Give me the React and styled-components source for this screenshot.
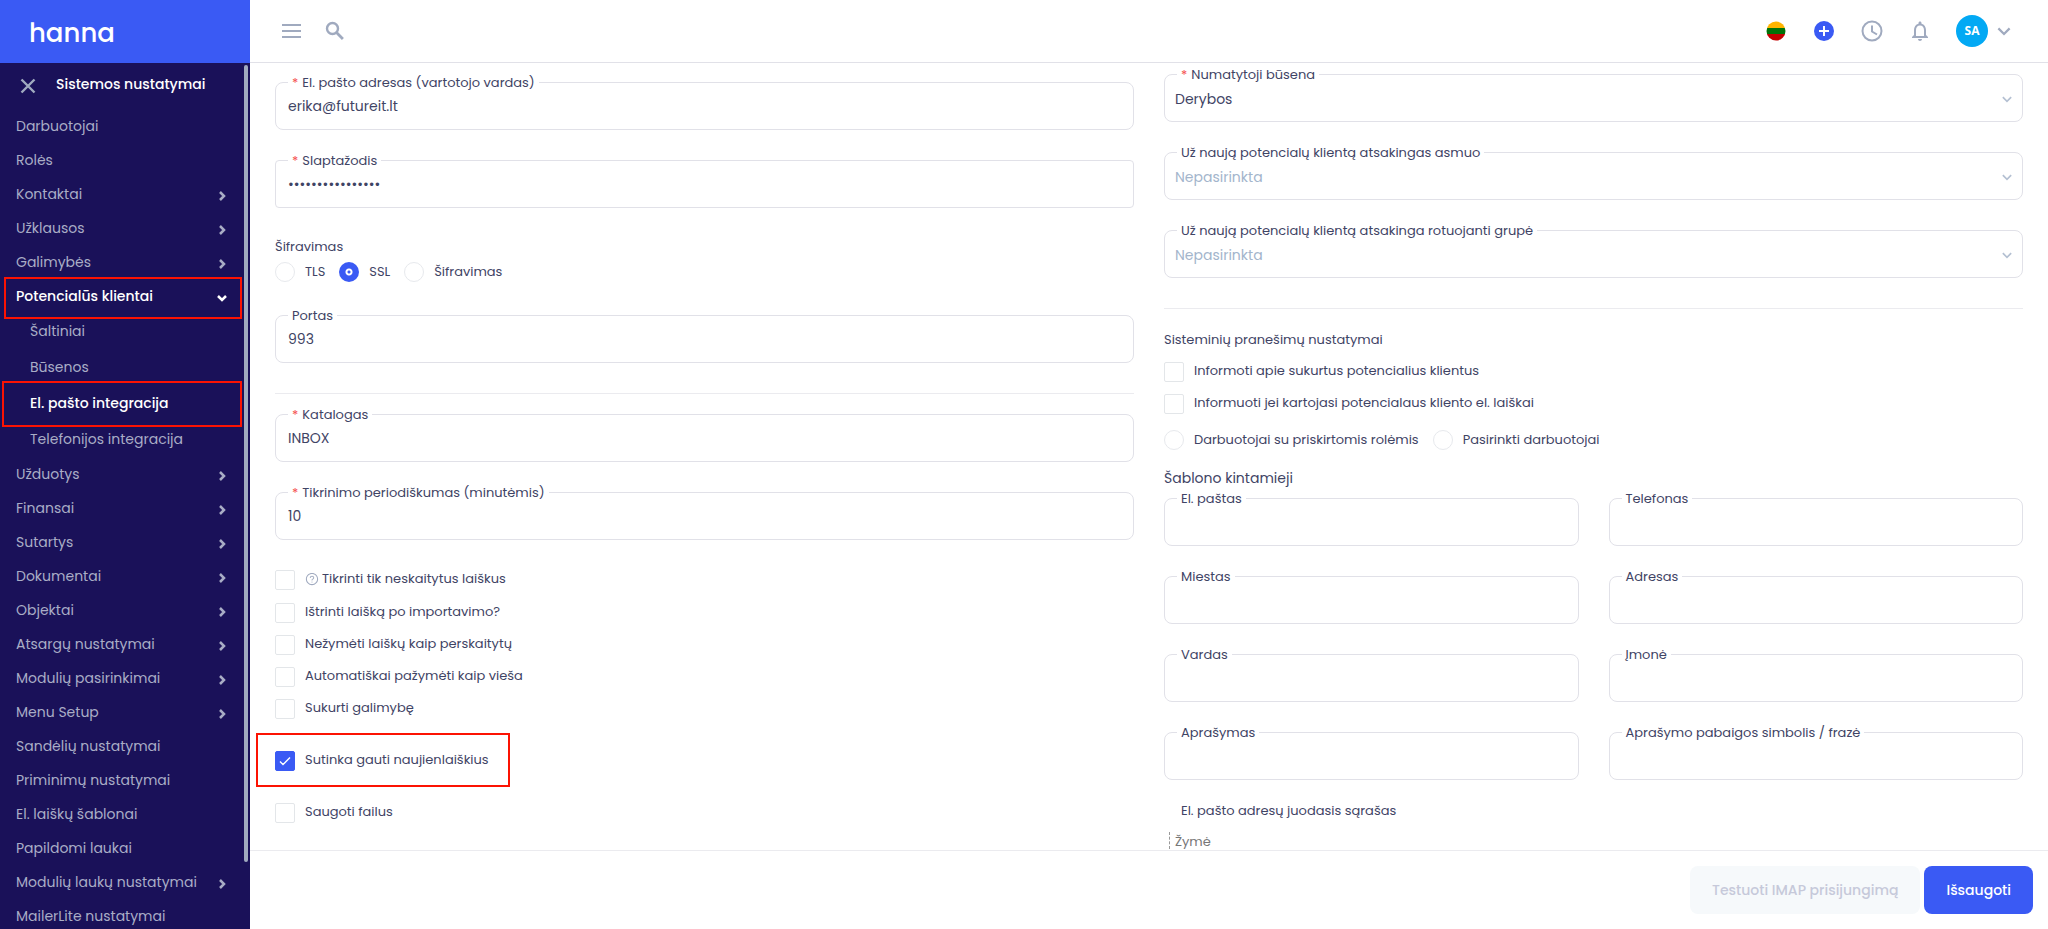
import React from 'react';
import styled, { createGlobalStyle, css } from 'styled-components'
import { MdNotificationsNone } from 'react-icons/md'
import { AiOutlineQuestionCircle } from 'react-icons/ai'

// ----- colors -----

const blue = '#3a5af4'
const navy = '#1a1159'
const text = '#3f4465'
const muted = '#a0aabf'
const line = '#e1e1e8'
const marker = '#fc1303'

// ----- style -----

const GlobalStyle = createGlobalStyle`
    * {
        box-sizing: border-box;
    }
    body {
        margin: 0;
        color: ${text};
        background: #fff;
        font-family: Poppins, Inter, "Liberation Sans", sans-serif;
        font-feature-settings: "cv11";
        font-size: 13px;
        line-height: 18px;
    }
    button, input, select {
        font: inherit;
        font-feature-settings: inherit;
        color: inherit;
    }
`
const Page = styled.div`
    display: grid;
    grid-template-columns: 250px 1fr;
    height: 100vh;
    overflow: hidden;
`

// sidebar

const Sidebar = styled.aside`
    display: flex;
    flex-direction: column;
    min-height: 0;
    background: ${navy};
`
const Brand = styled.a`
    flex: none;
    display: flex;
    align-items: center;
    height: 63px;
    padding: 3px 0 0 29px;
    background: ${blue};
    color: #fff;
    font-size: 26px;
    font-weight: 500;
    text-decoration: none;
`
const SidebarBody = styled.div`
    flex: 1;
    display: flex;
    min-height: 0;
    padding-right: 2px;
    overflow: hidden;
`
const Menu = styled.nav`
    flex: 1;
    color: #a9adc6;
    font-size: 14px;
`
const ScrollThumb = styled.div`
    width: 4px;
    height: 92%;
    margin-top: 2px;
    border-radius: 2px;
    background: ${muted};
`
const MenuTitle = styled.div`
    display: flex;
    align-items: center;
    gap: 20px;
    height: 46px;
    padding: 0 0 4px 20px;
    color: #fff;
    font-weight: 500;
`
const CloseButton = styled.button`
    display: flex;
    padding: 3px 0 0;
    border: 0;
    background: none;
    color: ${muted};
`
const marked = css`
    &::after {
        content: '';
        position: absolute;
        inset: ${props => props.$mark};
        border: 2px solid ${marker};
        pointer-events: none;
    }
`
const MenuLink = styled.a`
    position: relative;
    display: flex;
    align-items: center;
    justify-content: space-between;
    height: ${props => props.$sub ? '36px' : '34px'};
    padding: 0 16px 0 ${props => props.$sub ? '30px' : '16px'};
    color: ${props => props.$active ? '#fff' : 'inherit'};
    font-weight: ${props => props.$active ? 500 : 400};
    text-decoration: none;
    ${props => props.$mark && marked}
    svg {
        margin-top: 3px;
    }
`

// top bar

const Main = styled.div`
    display: flex;
    flex-direction: column;
    min-width: 0;
    min-height: 0;
`
const TopBar = styled.header`
    flex: none;
    display: flex;
    align-items: center;
    justify-content: space-between;
    height: 63px;
    padding: 0 37px 0 29px;
    border-bottom: 1px solid ${line};
`
const Tools = styled.div`
    display: flex;
    align-items: center;
    gap: ${props => props.$gap};
`
const IconButton = styled.button`
    display: flex;
    align-items: center;
    justify-content: center;
    width: 24px;
    height: 24px;
    padding: 0;
    border: 0;
    background: none;
    color: ${muted};
`
const Account = styled.button`
    display: flex;
    align-items: center;
    gap: 9px;
    padding: 0;
    border: 0;
    background: none;
    color: ${muted};
`
const Avatar = styled.span`
    width: 32px;
    border-radius: 50%;
    background: #03a9f4;
    color: #fff;
    font-family: "Open Sans", sans-serif;
    font-size: 12px;
    font-weight: 700;
    line-height: 32px;
    text-align: center;
`

// form

const Form = styled.form`
    flex: 1;
    display: flex;
    flex-direction: column;
    min-height: 0;
`
const Columns = styled.div`
    flex: 1;
    display: grid;
    grid-template-columns: 1fr 1fr;
    gap: 30px;
    min-height: 0;
    padding: 0 25px;
    overflow: hidden;
`
const Column = styled.div`
    min-width: 0;
    padding-top: ${props => props.$top};
`
const FieldBox = styled.div`
    position: relative;
    margin-bottom: 30px;
`
const FieldLabel = styled.label`
    position: absolute;
    top: -8px;
    left: 13px;
    padding: 0 4px;
    background: #fff;
`
const Star = styled.span`
    margin-right: 4px;
    color: #f5504e;
`
const Input = styled.input`
    display: block;
    width: 100%;
    height: 48px;
    padding: 0 12px;
    border: 1px solid ${line};
    border-radius: ${props => props.type === 'password' ? '4px' : '8px'};
    background: #fff;
    font-size: 14px;
    outline: 0;
`
const Select = styled.select`
    display: block;
    width: 100%;
    height: 48px;
    padding: 2px 10px 0;
    border: 1px solid ${line};
    border-radius: 8px;
    background: #fff;
    color: ${props => props.$empty ? '#a3b5cc' : text};
    font-size: 14px;
    appearance: none;
`
const SelectArrow = styled.span`
    position: absolute;
    top: 0;
    right: 11px;
    display: flex;
    align-items: center;
    height: 100%;
    padding-top: 2px;
    color: #b4c0d2;
    pointer-events: none;
`
const Divider = styled.hr`
    margin: 0 0 ${props => props.$after};
    border: 0;
    border-top: 1px solid #ebebef;
`
const Caption = styled.div`
    margin-bottom: ${props => props.$after};
    font-size: ${props => props.$big ? '14px' : '13px'};
`
const Fields = styled.div`
    display: grid;
    grid-template-columns: 1fr 1fr;
    column-gap: 30px;
`
const Radios = styled.div`
    display: flex;
    gap: 14px;
    margin-bottom: ${props => props.$after};
`
const Choice = styled.label`
    display: flex;
    align-items: center;
    gap: 10px;
`
const Radio = styled.input`
    width: 20px;
    height: 20px;
    margin: 0;
    border: 1px solid #e7e9ed;
    border-radius: 50%;
    appearance: none;
    &:checked {
        border: 0;
        background: radial-gradient(circle, ${blue} 1px, #fff 2px, #fff 3px, ${blue} 4px);
    }
`
const Checks = styled.div`
    display: flex;
    flex-direction: column;
    align-items: flex-start;
    gap: ${props => props.$gap};
    margin-bottom: ${props => props.$after};
`
const CheckLabel = styled.label`
    position: relative;
    display: flex;
    align-items: flex-start;
    gap: 10px;
    min-height: ${props => props.$help ? '21px' : '20px'};
    ${props => props.$mark && marked}
`
const CheckText = styled.span`
    display: flex;
    align-items: center;
    gap: 3px;
    svg {
        color: ${muted};
    }
`
const CheckBoxWrap = styled.span`
    display: grid;
    height: 20px;
    svg, input {
        grid-area: 1 / 1;
        place-self: center;
    }
    svg {
        z-index: 1;
        pointer-events: none;
    }
`
const Check = styled.input`
    width: 20px;
    height: 20px;
    margin: 0;
    border: 1px solid #e3e6e9;
    border-radius: 2px;
    background: #fff;
    appearance: none;
    &:checked {
        border-color: ${blue};
        background: ${blue};
    }
`
const ListCaption = styled.div`
    margin: -8px 0 12px 17px;
`
const TagLine = styled.div`
    margin-left: 5px;
    padding: 2px 0 0 5px;
    border-left: 1px dashed #999;
    color: #777;
    line-height: 15px;
`
const Footer = styled.footer`
    flex: none;
    display: flex;
    justify-content: flex-end;
    gap: 4px;
    padding: 15px;
    border-top: 1px solid #ebebef;
`
const Button = styled.button`
    height: 48px;
    padding: 0 22px;
    border: 0;
    border-radius: 8px;
    background: ${props => props.disabled ? '#f6f9fb' : blue};
    color: ${props => props.disabled ? '#c6c9da' : '#fff'};
    font-size: 14px;
    font-weight: 500;
`

// ----- icons -----

const Angle = ({ open }) =>
    <svg width="12" height="12" viewBox="0 0 12 12" fill="none" stroke="currentColor" strokeWidth="2.5">
        <path d={open ? 'M2 4l4 4 4-4' : 'M4 2l4 4-4 4'} />
    </svg>

const ChevronDown = ({ width, stroke }) =>
    <svg width={width} height={width / 2 + 2} viewBox="0 0 12 8" fill="none" stroke="currentColor" strokeWidth={stroke}>
        <path d="M1 1.2l5 5 5-5" />
    </svg>

const Cross = () =>
    <svg width="16" height="16" viewBox="0 0 16 16" fill="none" stroke="currentColor" strokeWidth="2.4">
        <path d="M1.5 1.5l13 13M14.5 1.5l-13 13" />
    </svg>

const Bars = () =>
    <svg width="19" height="14" viewBox="0 0 19 14" fill="currentColor">
        <path d="M0 0h19v2H0zM0 6h19v2H0zM0 12h19v2H0z" />
    </svg>

const Search = () =>
    <svg width="20" height="20" viewBox="0 0 20 20" fill="none" stroke="currentColor">
        <circle cx="7.5" cy="7.5" r="5.5" strokeWidth="2.4" />
        <path d="M11.5 11.5l6.4 6.4" strokeWidth="2.8" />
    </svg>

const Clock = () =>
    <svg width="22" height="22" viewBox="0 0 22 22" fill="none" stroke="currentColor" strokeWidth="2">
        <circle cx="11" cy="11" r="9.5" />
        <path d="M11 5.5v6l5 3" />
    </svg>

const Flag = () =>
    <svg width="20" height="20" viewBox="0 0 20 20">
        <clipPath id="flag"><circle cx="10" cy="10" r="9.5" /></clipPath>
        <g clipPath="url(#flag)">
            <path fill="#ffb400" d="M0 0h20v7H0z" />
            <path fill="#007308" d="M0 7h20v6H0z" />
            <path fill="#c40000" d="M0 13h20v7H0z" />
        </g>
    </svg>

const Plus = () =>
    <svg width="20" height="20" viewBox="0 0 20 20">
        <circle cx="10" cy="10" r="10" fill={blue} />
        <path d="M10 5v10M5 10h10" stroke="#fff" strokeWidth="2" />
    </svg>

const Tick = () =>
    <svg width="12" height="12" viewBox="0 0 12 12" fill="none" stroke="#fff" strokeWidth="1.4">
        <path d="M1 6.6l3 3 7-7" />
    </svg>

// ----- data -----

const menu = [
    { name: 'Darbuotojai' },
    { name: 'Rolės' },
    { name: 'Kontaktai', more: true },
    { name: 'Užklausos', more: true },
    { name: 'Galimybės', more: true },
    { name: 'Potencialūs klientai', more: true, active: true, mark: '-2px 2px -6px 4px' },
    { name: 'Šaltiniai', sub: true },
    { name: 'Būsenos', sub: true },
    { name: 'El. pašto integracija', sub: true, active: true, mark: '-4px 2px -6px 2px' },
    { name: 'Telefonijos integracija', sub: true },
    { name: 'Užduotys', more: true },
    { name: 'Finansai', more: true },
    { name: 'Sutartys', more: true },
    { name: 'Dokumentai', more: true },
    { name: 'Objektai', more: true },
    { name: 'Atsargų nustatymai', more: true },
    { name: 'Modulių pasirinkimai', more: true },
    { name: 'Menu Setup', more: true },
    { name: 'Sandėlių nustatymai' },
    { name: 'Priminimų nustatymai' },
    { name: 'El. laiškų šablonai' },
    { name: 'Papildomi laukai' },
    { name: 'Modulių laukų nustatymai', more: true },
    { name: 'MailerLite nustatymai' },
]

const templateFields = [
    'El. paštas', 'Telefonas',
    'Miestas', 'Adresas',
    'Vardas', 'Įmonė',
    'Aprašymas', 'Aprašymo pabaigos simbolis / frazė',
]

// ----- components -----

const Field = ({ id, label, required, value = '', type = 'text' }) =>
    <FieldBox>
        <Input id={id} type={type} defaultValue={value} autoComplete="off" />
        <FieldLabel htmlFor={id}>{required && <Star>*</Star>}{label}</FieldLabel>
    </FieldBox>

const SelectField = ({ id, label, required, value }) =>
    <FieldBox>
        <Select id={id} $empty={!value}>
            <option>{value || 'Nepasirinkta'}</option>
        </Select>
        <FieldLabel htmlFor={id}>{required && <Star>*</Star>}{label}</FieldLabel>
        <SelectArrow><ChevronDown width={10} stroke={2} /></SelectArrow>
    </FieldBox>

const RadioChoice = ({ name, label, checked }) =>
    <Choice>
        <Radio type="radio" name={name} defaultChecked={checked} />
        {label}
    </Choice>

const CheckChoice = ({ label, checked, help, mark }) =>
    <CheckLabel $help={help} $mark={mark}>
        <CheckBoxWrap>
            <Check type="checkbox" defaultChecked={checked} />
            {checked && <Tick />}
        </CheckBoxWrap>
        <CheckText>{help && <AiOutlineQuestionCircle size={14} />}{label}</CheckText>
    </CheckLabel>

const SideMenu = () =>
    <Sidebar>
        <Brand href="#">hanna</Brand>
        <SidebarBody>
            <Menu>
                <MenuTitle>
                    <CloseButton aria-label="Uždaryti"><Cross /></CloseButton>
                    Sistemos nustatymai
                </MenuTitle>
                {menu.map(item =>
                    <MenuLink key={item.name} href="#" $sub={item.sub} $active={item.active} $mark={item.mark}>
                        {item.name}
                        {item.more && <Angle open={item.active} />}
                    </MenuLink>
                )}
            </Menu>
            <ScrollThumb />
        </SidebarBody>
    </Sidebar>

const Header = () =>
    <TopBar>
        <Tools $gap="20px">
            <IconButton aria-label="Meniu"><Bars /></IconButton>
            <IconButton aria-label="Paieška"><Search /></IconButton>
        </Tools>
        <Tools $gap="24px">
            <IconButton aria-label="Kalba"><Flag /></IconButton>
            <IconButton aria-label="Pridėti"><Plus /></IconButton>
            <IconButton aria-label="Istorija"><Clock /></IconButton>
            <IconButton aria-label="Pranešimai"><MdNotificationsNone size={24} /></IconButton>
            <Account type="button">
                <Avatar>SA</Avatar>
                <ChevronDown width={14} stroke={2} />
            </Account>
        </Tools>
    </TopBar>

const App = () =>
    <Page>
        <GlobalStyle />
        <SideMenu />
        <Main>
            <Header />
            <Form onSubmit={e => e.preventDefault()}>
                <Columns>
                    <Column $top="19px">
                        <Field id="email" label="El. pašto adresas (vartotojo vardas)" required value="erika@futureit.lt" />
                        <Field id="password" label="Slaptažodis" required type="password" value="slaptazodis12345" />
                        <Caption $after="6px">Šifravimas</Caption>
                        <Radios $after="33px">
                            <RadioChoice name="encryption" label="TLS" />
                            <RadioChoice name="encryption" label="SSL" checked />
                            <RadioChoice name="encryption" label="Šifravimas" />
                        </Radios>
                        <Field id="port" label="Portas" value="993" />
                        <Divider $after="20px" />
                        <Field id="folder" label="Katalogas" required value="INBOX" />
                        <Field id="period" label="Tikrinimo periodiškumas (minutėmis)" required value="10" />
                        <Checks $gap="12px" $after="32px">
                            <CheckChoice label="Tikrinti tik neskaitytus laiškus" help />
                            <CheckChoice label="Ištrinti laišką po importavimo?" />
                            <CheckChoice label="Nežymėti laiškų kaip perskaitytų" />
                            <CheckChoice label="Automatiškai pažymėti kaip vieša" />
                            <CheckChoice label="Sukurti galimybę" />
                        </Checks>
                        <Checks $gap="32px" $after="0">
                            <CheckChoice label="Sutinka gauti naujienlaiškius" checked mark="-18px -21px -16px -19px" />
                            <CheckChoice label="Saugoti failus" />
                        </Checks>
                    </Column>
                    <Column $top="11px">
                        <SelectField id="status" label="Numatytoji būsena" required value="Derybos" />
                        <SelectField id="person" label="Už naują potencialų klientą atsakingas asmuo" />
                        <SelectField id="group" label="Už naują potencialų klientą atsakinga rotuojanti grupė" />
                        <Divider $after="22px" />
                        <Caption $after="13px">Sisteminių pranešimų nustatymai</Caption>
                        <Checks $gap="12px" $after="16px">
                            <CheckChoice label="Informoti apie sukurtus potencialius klientus" />
                            <CheckChoice label="Informuoti jei kartojasi potencialaus kliento el. laiškai" />
                        </Checks>
                        <Radios $after="19px">
                            <RadioChoice name="employees" label="Darbuotojai su priskirtomis rolėmis" />
                            <RadioChoice name="employees" label="Pasirinkti darbuotojai" />
                        </Radios>
                        <Caption $big $after="11px">Šablono kintamieji</Caption>
                        <Fields>
                            {templateFields.map((label, i) =>
                                <Field key={label} id={'template-' + i} label={label} />
                            )}
                        </Fields>
                        <ListCaption>El. pašto adresų juodasis sąrašas</ListCaption>
                        <TagLine>Žymė</TagLine>
                    </Column>
                </Columns>
                <Footer>
                    <Button type="button" disabled>Testuoti IMAP prisijungimą</Button>
                    <Button type="submit">Išsaugoti</Button>
                </Footer>
            </Form>
        </Main>
    </Page>

export default App
